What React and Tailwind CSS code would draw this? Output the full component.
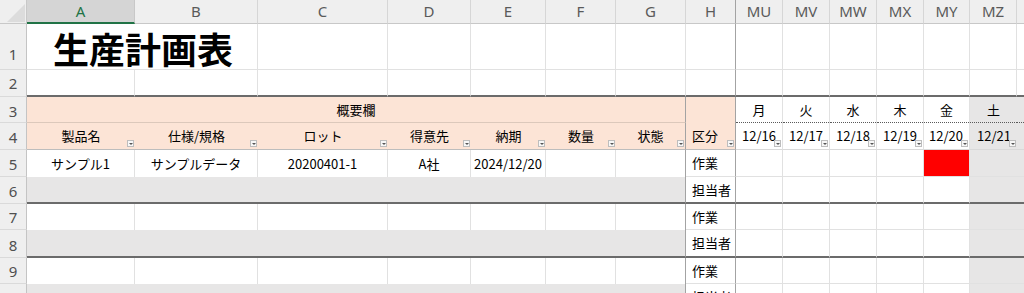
import React from 'react';

const JP = "font-['Noto_Sans_CJK_JP',sans-serif]";
const LAT = "font-['Noto_Sans',sans-serif]";

const COLS = ['A', 'B', 'C', 'D', 'E', 'F', 'G', 'H', 'MU', 'MV', 'MW', 'MX', 'MY', 'MZ'];
const DAYS = [
  { w: '月', d: '12/16' },
  { w: '火', d: '12/17' },
  { w: '水', d: '12/18' },
  { w: '木', d: '12/19' },
  { w: '金', d: '12/20' },
  { w: '土', d: '12/21' },
];
const HEAD = ['製品名', '仕様/規格', 'ロット', '得意先', '納期', '数量', '状態'];
const ROW5 = ['サンプル1', 'サンプルデータ', '20200401-1', 'A社', '2024/12/20', '', ''];

const THICK = 'border-b-2 border-b-[#6b6b6b]';
const THIN = 'border-b border-b-[#e1e1e1]';
const VR = 'border-r border-r-[#e1e1e1]';
const FR = 'border-r border-r-[#a3a3a3]';
const GRAY = 'bg-[#e7e6e6]';
const SALMON = 'bg-[#fce4d6]';

function Filter() {
  return (
    <span className="absolute right-px bottom-[2px] flex h-[7px] w-[7px] items-center justify-center border border-[#bdbdbd] bg-[#f7f7f7]">
      <span className="h-0 w-0 border-x-[2px] border-t-[2px] border-x-transparent border-t-[#555]" />
    </span>
  );
}

function RowHead({ n, pb }) {
  return (
    <div
      className={`flex items-end justify-center ${pb} border-r border-b border-r-[#c4c4c4] border-b-[#dadada] bg-[#efefef] text-[15px] leading-none text-[#505050] ${LAT}`}
    >
      {n}
    </div>
  );
}

// empty white cells across C..MZ plus the tail column, used by rows 1 and 2
function PlainRest({ bottom, from }) {
  const cells = [];
  for (let i = from; i < COLS.length; i++) {
    const right = COLS[i] === 'H' ? FR : VR;
    cells.push(<div key={COLS[i]} className={`bg-white ${right} ${bottom}`} />);
  }
  cells.push(<div key="tail" className={`bg-white ${bottom}`} />);
  return cells;
}

// 作業 / 担当者 column and the calendar cells of a data row
function RightSide({ label, bottom, red }) {
  return (
    <>
      <div className={`flex items-center pl-[6px] bg-white ${FR} ${bottom} text-[13px] text-black`}>{label}</div>
      {DAYS.slice(0, 5).map((d, i) => (
        <div
          key={d.d}
          className={`${red && i === 4 ? 'bg-[#ff0000]' : 'bg-white'} ${VR} ${bottom}`}
        />
      ))}
      <div className={`${GRAY} ${bottom}`} />
      <div className={`${GRAY} ${bottom}`} />
    </>
  );
}

function WorkRow({ n, values, red }) {
  return (
    <>
      <RowHead n={n} pb="pb-[4px]" />
      {(values || ['', '', '', '', '', '', '']).map((v, i) => (
        <div
          key={i}
          className={`flex items-center justify-center bg-white ${i === 6 ? FR : VR} text-[13px] text-black`}
        >
          {v}
        </div>
      ))}
      <RightSide label="作業" bottom={THIN} red={red} />
    </>
  );
}

function StaffRow({ n, bottom }) {
  return (
    <>
      <RowHead n={n} pb="pb-[4px]" />
      <div className={`col-span-7 ${GRAY} ${FR} ${bottom}`} />
      <RightSide label="担当者" bottom={bottom} />
    </>
  );
}

export default function App() {
  return (
    <div className={`h-[293px] w-[1024px] overflow-hidden bg-white ${JP}`}>
      <div className="grid grid-cols-[27px_108px_123px_130px_83px_75px_70px_70px_50px_47px_47px_47px_47px_46px_47px_1fr] grid-rows-[24px_46px_27px_26px_27px_27px_27px_26px_28px_26px_27px]">
        {/* column letters */}
        <div className="relative border-r border-b border-r-[#c8c8c8] border-b-[#c8c8c8] bg-[#efefef]">
          <span className="absolute right-[1px] bottom-[1px] h-0 w-0 border-b-[18px] border-l-[18px] border-b-[#dcdcdc] border-l-transparent" />
        </div>
        {COLS.map((c) =>
          c === 'A' ? (
            <div
              key={c}
              className={`flex items-center justify-center border-r border-b-2 border-r-[#c8c8c8] border-b-[#217346] bg-[#d5d5d5] text-[15px] text-[#217346] ${LAT}`}
            >
              {c}
            </div>
          ) : (
            <div
              key={c}
              className={`flex items-center justify-center border-r border-b ${c === 'H' ? 'border-r-[#a3a3a3]' : 'border-r-[#d6d6d6]'} border-b-[#c8c8c8] bg-[#efefef] text-[15px] text-[#5a5a5a] ${LAT}`}
            >
              {c}
            </div>
          )
        )}
        <div className="border-b border-b-[#c8c8c8] bg-[#efefef]" />

        {/* row 1: title */}
        <RowHead n="1" pb="pb-[7px]" />
        <div className={`col-span-2 flex items-center pt-[3px] pl-[26px] bg-white ${VR} ${THIN}`}>
          <span className="text-[36px] leading-none font-bold text-black">生産計画表</span>
        </div>
        <PlainRest bottom={THIN} from={2} />

        {/* row 2 */}
        <RowHead n="2" pb="pb-[5px]" />
        <div className={`bg-white ${VR} ${THICK}`} />
        <div className={`bg-white ${VR} ${THICK}`} />
        <PlainRest bottom={THICK} from={2} />

        {/* row 3: group caption, 区分, weekdays */}
        <RowHead n="3" pb="pb-[3px]" />
        <div className={`col-span-7 flex items-center justify-center ${SALMON} ${FR} border-b border-b-[#dcc8bb] text-[13px] text-black`}>
          概要欄
        </div>
        <div className={`row-span-2 flex flex-col justify-end ${SALMON} ${FR} border-b border-b-[#bdbdbd]`}>
          <div className="relative flex h-[26px] items-center pl-[6px] text-[13px] text-black">
            区分
            <Filter />
          </div>
        </div>
        {DAYS.map((d, i) => (
          <div
            key={d.w}
            className={`relative flex items-center justify-center ${i === 5 ? GRAY : `bg-white ${VR}`} text-[13px] text-black`}
          >
            {d.w}
            <span className="absolute inset-x-0 bottom-0 border-t border-dotted border-[#5a5a5a]" />
          </div>
        ))}
        <div className={`relative ${GRAY}`}>
          <span className="absolute inset-x-0 bottom-0 border-t border-dotted border-[#5a5a5a]" />
        </div>

        {/* row 4: column titles with filter buttons */}
        <RowHead n="4" pb="pb-[4px]" />
        {HEAD.map((h, i) => (
          <div
            key={h}
            className={`relative flex items-center justify-center ${SALMON} ${i === 6 ? FR : ''} border-b border-b-[#bdbdbd] text-[13px] text-black`}
          >
            {h}
            <Filter />
          </div>
        ))}
        {DAYS.map((d, i) => (
          <div
            key={d.d}
            className={`relative flex items-center justify-end pr-[6px] ${i === 5 ? GRAY : `bg-white ${VR}`} border-b border-b-[#d9d9d9] text-[13px] text-black`}
          >
            {d.d}
            <Filter />
          </div>
        ))}
        <div className={`${GRAY} border-b border-b-[#d9d9d9]`} />

        {/* rows 5-10: data blocks */}
        <WorkRow n="5" values={ROW5} red />
        <StaffRow n="6" bottom={THICK} />
        <WorkRow n="7" />
        <StaffRow n="8" bottom={THICK} />
        <WorkRow n="9" />
        <StaffRow n="10" bottom={THIN} />
      </div>
    </div>
  );
}
